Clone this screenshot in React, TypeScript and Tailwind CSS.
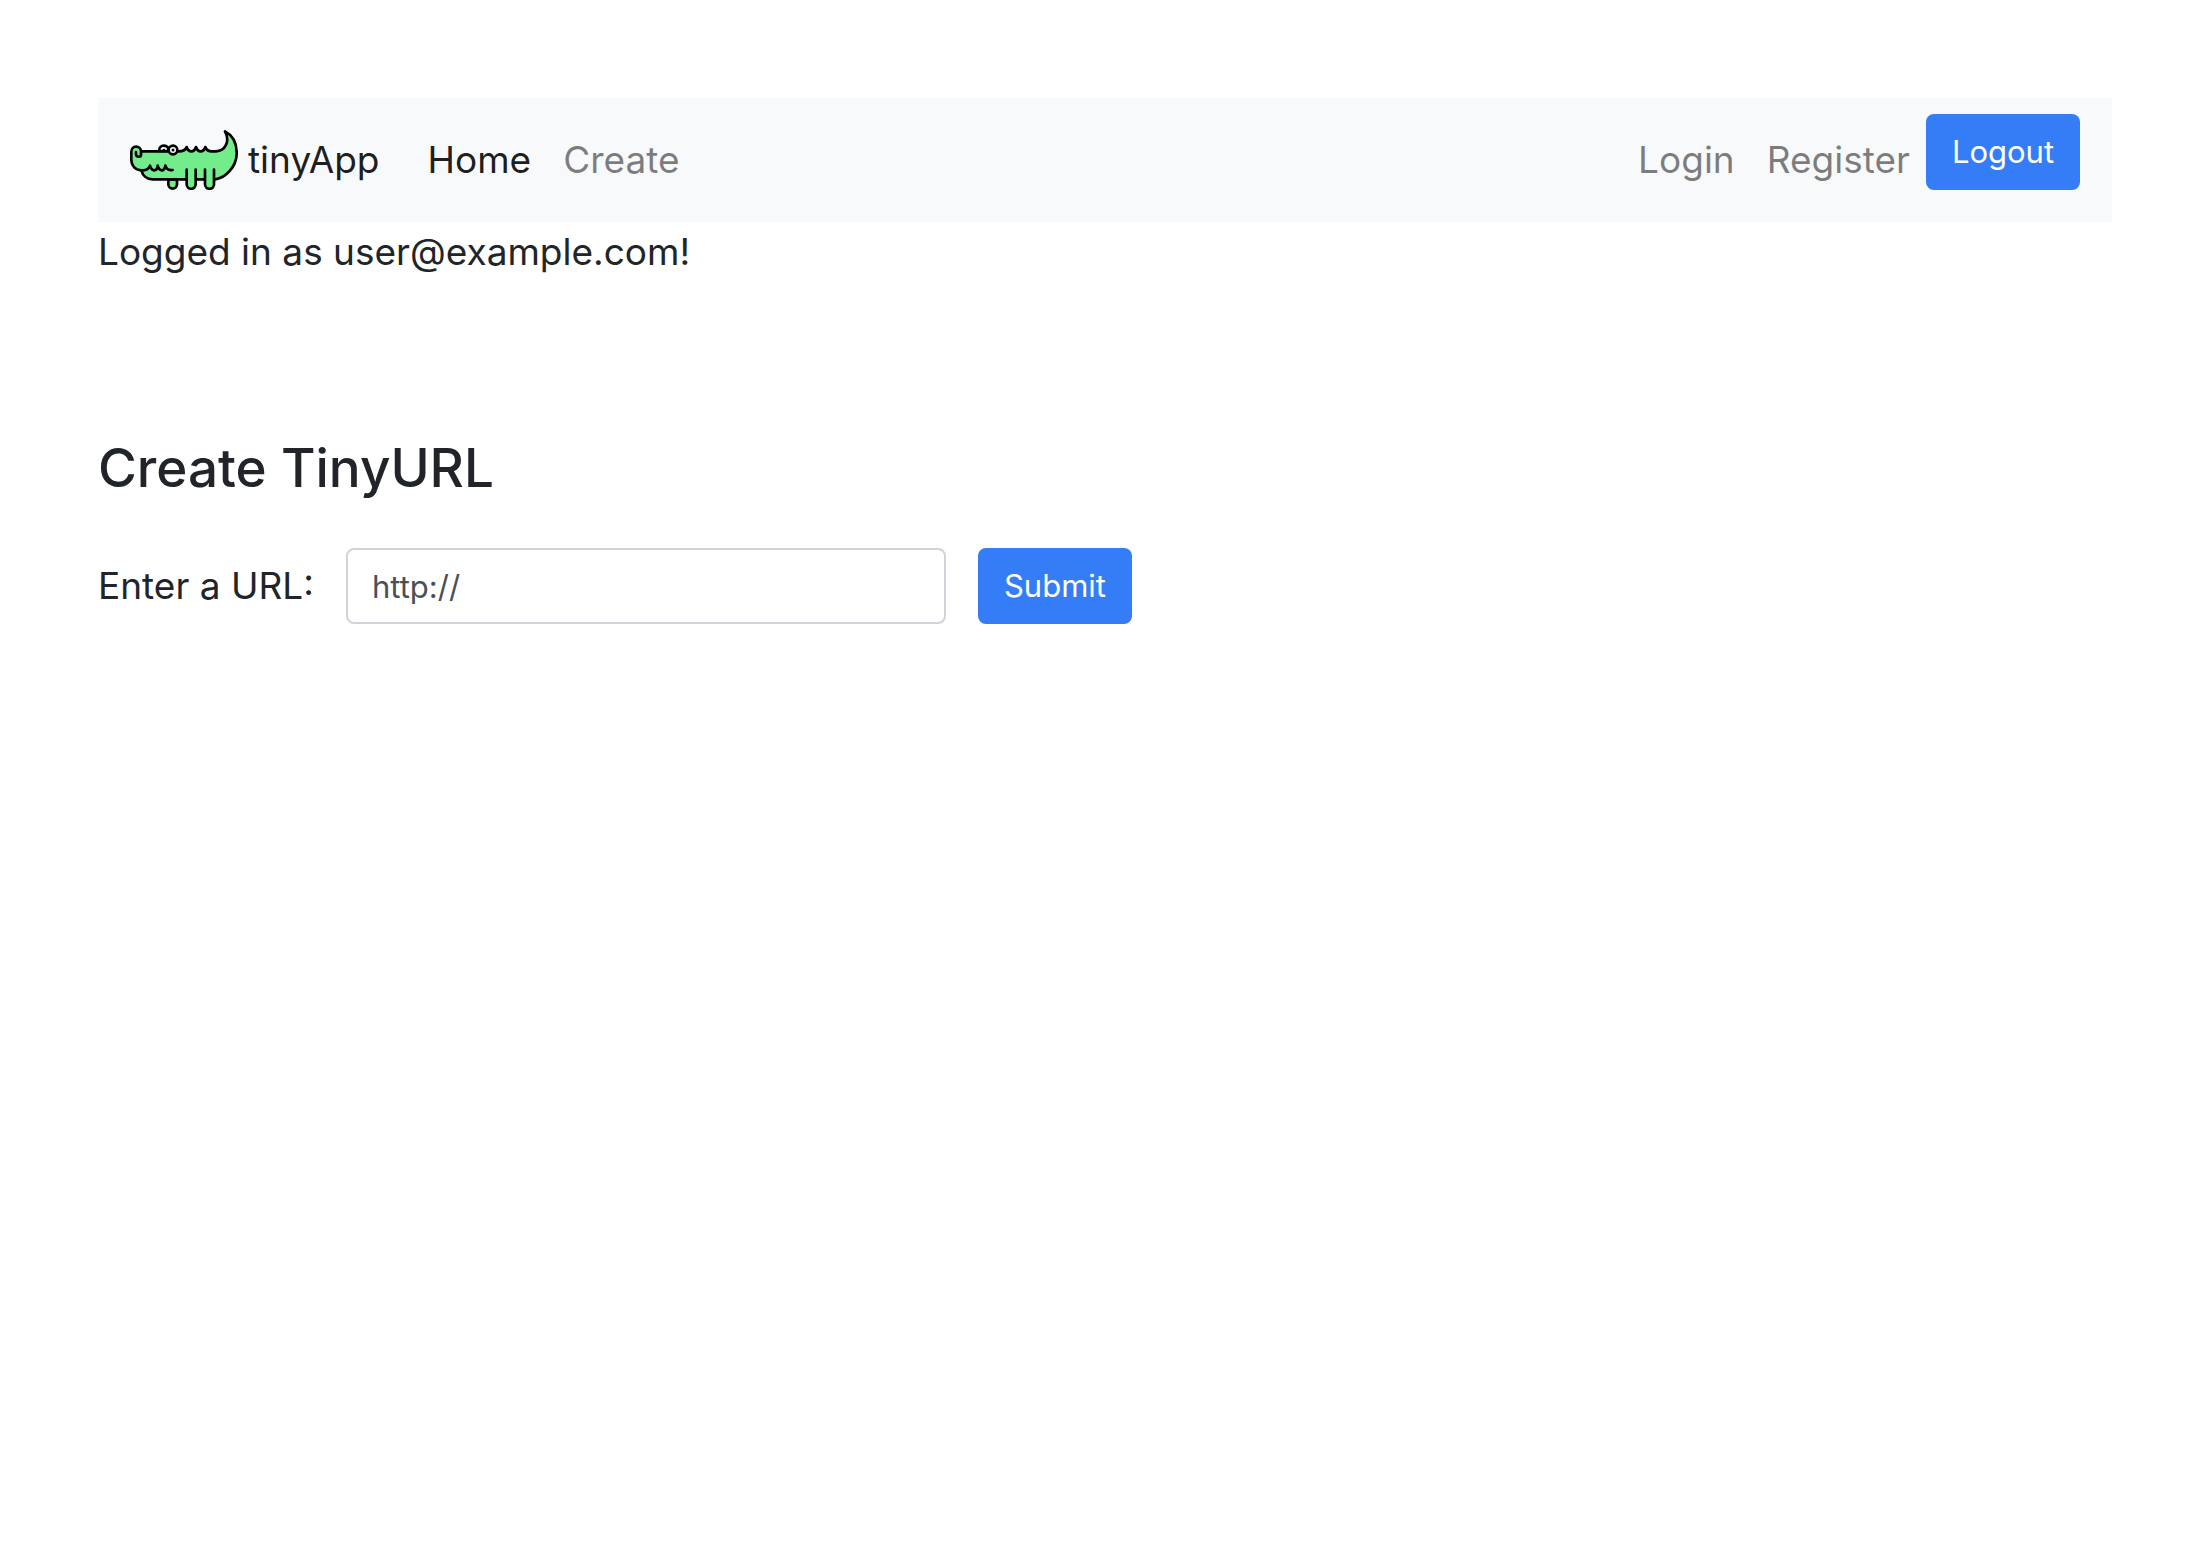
import type { ReactNode } from "react";

function Crocodile() {
  return (
    <svg viewBox="30 30 324 180" className="h-15 w-27 shrink-0" fill="none" stroke="#000" strokeWidth="8" strokeLinecap="round" strokeLinejoin="round" aria-hidden="true">
      <path fill="#73ed8c" d="M145 178v15a13 13 0 0 0 26 0v-15z" />
      <path fill="#73ed8c" d="M64 94H172C186 95 197 90 200 81C203 90 208 94 214 94C220 94 225 90 228 81C231 90 236 94 242 94C248 94 253 90 256 81C259 90 265 94 276 94H288C314 92 332 66 315 34C342 48 351 76 350 103C348 140 318 174 286 178H98C80 178 68 166 64 151C46 150 34 138 34 118V96C34 86 40 80 48 80C57 80 63 86 63 94V105C62 112 49 112 48 104V96" />
      <path d="M64 151C76 152 87 147 90 137C93 147 98 151 103 151C108 151 112 147 113 137C116 147 121 151 126 151C131 151 134 147 136 137C139 147 147 152 158 150" />
      <path fill="#fff" d="M117 93C117 83 123 77 131 77C138 77 143 80 145 85V93Z" />
      <circle cx="132" cy="90" r="4" fill="#000" stroke="none" />
      <circle cx="159" cy="90" r="13" fill="#fff" />
      <circle cx="159" cy="90" r="4.5" fill="#000" stroke="none" />
      <path fill="#73ed8c" stroke="none" d="M200 148h27v45a13 13 0 0 1-27 0zM255 148h27v45a13 13 0 0 1-27 0z" />
      <path d="M200 149v44a13.500 13.500 0 0 0 27 0v-44M255 149v44a13.500 13.500 0 0 0 27 0v-44" />
    </svg>
  );
}

function NavLink({ active = false, children }: { active?: boolean; children: ReactNode }) {
  return (
    <li>
      <a href="#" className={active ? "block px-4 text-black/90" : "block px-4 text-black/50"}>
        {children}
      </a>
    </li>
  );
}

export default function App() {
  return (
    <div className="min-h-screen bg-white pt-[98px] pr-[84px] pl-[98px] font-['Inter',sans-serif] text-[37px] leading-[60px] text-[#212529]">
      <nav className="flex items-center bg-[#f8f9fa] px-8 py-4">
        <a href="#" className="mr-8 flex items-center gap-[10px] text-black/90">
          <Crocodile />
          tinyApp
        </a>
        <ul className="mr-auto flex">
          <NavLink active>Home</NavLink>
          <NavLink>Create</NavLink>
        </ul>
        <ul className="flex">
          <NavLink>Login</NavLink>
          <NavLink>Register</NavLink>
        </ul>
        <form className="mb-4" onSubmit={(e) => e.preventDefault()}>
          <button type="submit" className="block h-[76px] w-[154px] rounded-lg bg-[#347df6] text-[31px] leading-[48px] text-white">
            Logout
          </button>
        </form>
      </nav>
      <p>Logged in as user@example.com!</p>
      <main className="mt-[152px]">
        <h3 className="text-[53px] leading-[68px] font-medium">Create TinyURL</h3>
        <form className="mt-[46px] flex items-center gap-8" onSubmit={(e) => e.preventDefault()}>
          <label htmlFor="longURL" className="w-[216px] whitespace-nowrap">Enter a URL:</label>
          <input
            id="longURL"
            name="longURL"
            type="text"
            placeholder="http://"
            className="h-[76px] w-[600px] rounded-lg border-2 border-[#ced4da] bg-white px-6 text-[31px] leading-[48px] placeholder:text-[#495057]"
          />
          <button type="submit" className="h-[76px] w-[154px] rounded-lg bg-[#347df6] text-[31px] leading-[48px] text-white">
            Submit
          </button>
        </form>
      </main>
    </div>
  );
}
